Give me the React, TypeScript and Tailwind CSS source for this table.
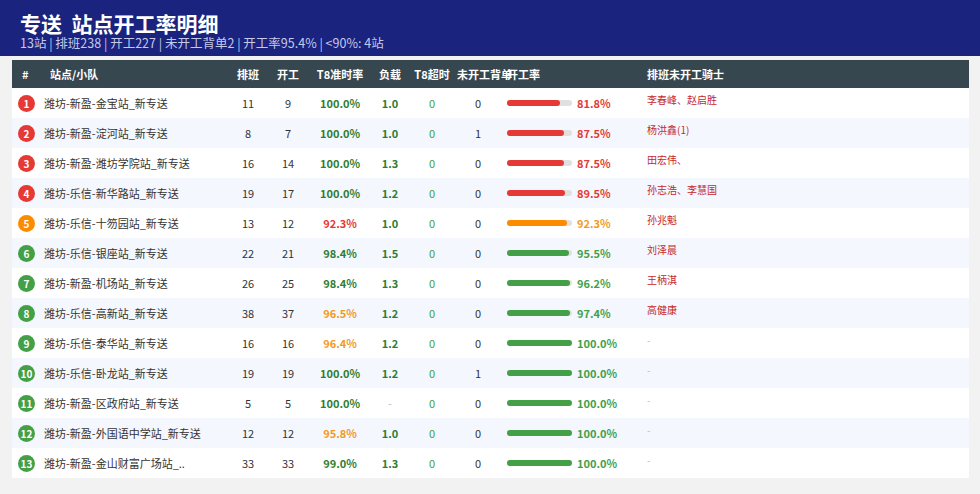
import React from "react";

type Row = {
  name: string;
  pb: number;
  kg: number;
  t8: string;
  load: string;
  over: number;
  back: number;
  rate: number;
  riders: string;
};

const rows: Row[] = [
  { name: "潍坊-新盈-金宝站_新专送", pb: 11, kg: 9, t8: "100.0", load: "1.0", over: 0, back: 0, rate: 81.8, riders: "李春峰、赵启胜" },
  { name: "潍坊-新盈-淀河站_新专送", pb: 8, kg: 7, t8: "100.0", load: "1.0", over: 0, back: 1, rate: 87.5, riders: "杨洪鑫(1)" },
  { name: "潍坊-新盈-潍坊学院站_新专送", pb: 16, kg: 14, t8: "100.0", load: "1.3", over: 0, back: 0, rate: 87.5, riders: "田宏伟、" },
  { name: "潍坊-乐信-新华路站_新专送", pb: 19, kg: 17, t8: "100.0", load: "1.2", over: 0, back: 0, rate: 89.5, riders: "孙志浩、李慧国" },
  { name: "潍坊-乐信-十笏园站_新专送", pb: 13, kg: 12, t8: "92.3", load: "1.0", over: 0, back: 0, rate: 92.3, riders: "孙兆魁" },
  { name: "潍坊-乐信-银座站_新专送", pb: 22, kg: 21, t8: "98.4", load: "1.5", over: 0, back: 0, rate: 95.5, riders: "刘泽晨" },
  { name: "潍坊-新盈-机场站_新专送", pb: 26, kg: 25, t8: "98.4", load: "1.3", over: 0, back: 0, rate: 96.2, riders: "王柄淇" },
  { name: "潍坊-乐信-高新站_新专送", pb: 38, kg: 37, t8: "96.5", load: "1.2", over: 0, back: 0, rate: 97.4, riders: "高健康" },
  { name: "潍坊-乐信-泰华站_新专送", pb: 16, kg: 16, t8: "96.4", load: "1.2", over: 0, back: 0, rate: 100.0, riders: "" },
  { name: "潍坊-乐信-卧龙站_新专送", pb: 19, kg: 19, t8: "100.0", load: "1.2", over: 0, back: 1, rate: 100.0, riders: "" },
  { name: "潍坊-新盈-区政府站_新专送", pb: 5, kg: 5, t8: "100.0", load: "-", over: 0, back: 0, rate: 100.0, riders: "" },
  { name: "潍坊-新盈-外国语中学站_新专送", pb: 12, kg: 12, t8: "95.8", load: "1.0", over: 0, back: 0, rate: 100.0, riders: "" },
  { name: "潍坊-新盈-金山财富广场站_..", pb: 33, kg: 33, t8: "99.0", load: "1.3", over: 0, back: 0, rate: 100.0, riders: "" },
];

const FONT = { fontFamily: '"Noto Sans CJK SC", "Noto Sans", sans-serif' };

function t8Color(v: string) {
  const n = parseFloat(v);
  if (n >= 98) return "text-[#2e7d32]";
  if (n >= 95) return "text-[#f29a1f]";
  return "text-[#e53935]";
}

function rateKind(r: number) {
  if (r < 90) return { bar: "bg-[#e53935]", text: "text-[#e53935]", badge: "bg-[#e53935]" };
  if (r < 95) return { bar: "bg-[#fb8c00]", text: "text-[#f29a1f]", badge: "bg-[#fb8c00]" };
  return { bar: "bg-[#43a047]", text: "text-[#43a047]", badge: "bg-[#43a047]" };
}

const GRID = "grid grid-cols-[28px_191px_34px_46px_58px_42px_42px_50px_140px_1fr]";

export default function App() {
  return (
    <div className="min-h-[494px] w-full bg-[#f2f2f2]" style={FONT}>
      <div className="h-[56px] bg-[#1a237e] px-[20px] pt-[11px]">
        <div className="whitespace-pre text-[21px] font-bold leading-[24px] text-white">专送  站点开工率明细</div>
        <div className="text-[12.5px] leading-[15px] text-[#c5cae9]">
          13站 | 排班238 | 开工227 | 未开工背单2 | 开工率95.4% | &lt;90%: 4站
        </div>
      </div>
      <div className="ml-[12px] mt-[4px] w-[957px] bg-white">
        <div className={`${GRID} h-[28px] items-center bg-[#37474f] text-[11px] font-bold text-white`}>
          <div className="pl-[10px]">#</div>
          <div className="pl-[10px]">站点/小队</div>
          <div className="text-center">排班</div>
          <div className="text-center">开工</div>
          <div className="text-center whitespace-nowrap">T8准时率</div>
          <div className="text-center">负载</div>
          <div className="text-center whitespace-nowrap">T8超时</div>
          <div className="whitespace-nowrap pl-[4px]">未开工背单</div>
          <div className="whitespace-nowrap pl-[4px]">开工率</div>
          <div className="pl-[4px]">排班未开工骑士</div>
        </div>
        {rows.map((r, i) => {
          const k = rateKind(r.rate);
          return (
            <div
              key={i}
              className={`${GRID} h-[30px] items-center text-[11px] text-[#333333] ${i % 2 === 1 ? "bg-[#f4f7fd]" : "bg-white"}`}
            >
              <div className="flex justify-center pl-[1px]">
                <div className={`flex h-[17px] w-[17px] items-center justify-center rounded-full text-[10px] font-bold text-white ${k.badge}`}>
                  {i + 1}
                </div>
              </div>
              <div className="whitespace-nowrap pl-[4px]">{r.name}</div>
              <div className="text-center">{r.pb}</div>
              <div className="text-center">{r.kg}</div>
              <div className={`text-center font-bold ${t8Color(r.t8)}`}>{r.t8}%</div>
              <div className={`text-center ${r.load === "-" ? "text-[#bdbdbd]" : "font-bold text-[#2e7d32]"}`}>{r.load}</div>
              <div className="text-center text-[#43a047]">{r.over}</div>
              <div className="text-center">{r.back}</div>
              <div className="flex items-center pl-[4px]">
                <div className="h-[6px] w-[65px] rounded-full bg-[#e0e0e0]">
                  <div className={`h-[6px] rounded-full ${k.bar}`} style={{ width: `${Math.max(0, Math.min(100, r.rate))}%` }} />
                </div>
                <span className={`ml-[5px] font-bold ${k.text}`}>{r.rate.toFixed(1)}%</span>
              </div>
              <div className="self-start pl-[4px] pt-[5px] text-[10px] leading-[14px]">
                {r.riders ? <span className="text-[#c62828]">{r.riders}</span> : <span className="text-[#bdbdbd]">-</span>}
              </div>
            </div>
          );
        })}
      </div>
    </div>
  );
}
